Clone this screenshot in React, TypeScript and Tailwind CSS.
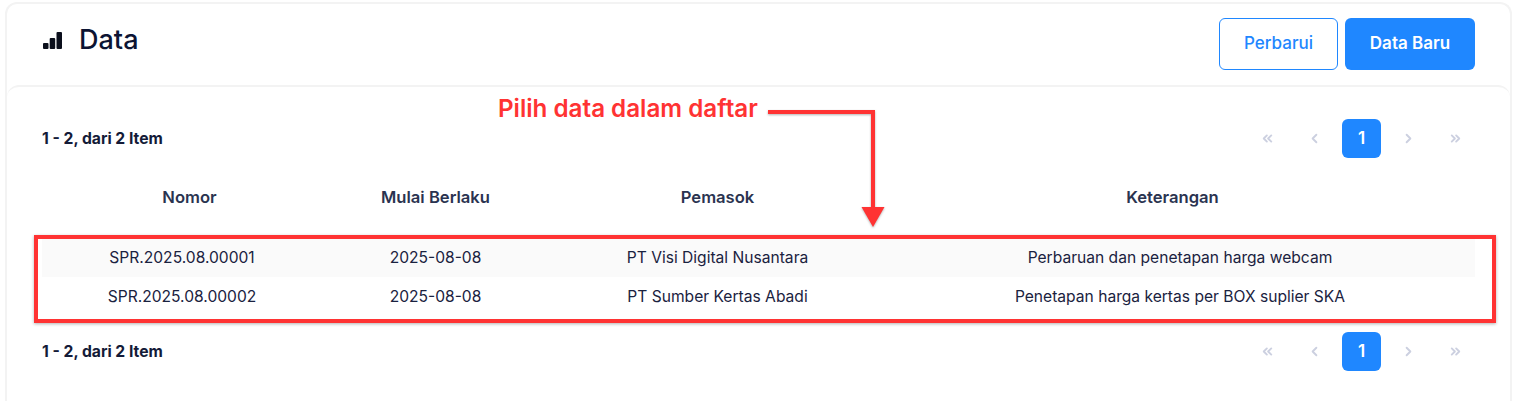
import { ChevronLeft, ChevronRight, ChevronsLeft, ChevronsRight } from "lucide-react";

const rows = [
  { nomor: "SPR.2025.08.00001", mulai: "2025-08-08", pemasok: "PT Visi Digital Nusantara", ket: "Perbaruan dan penetapan harga webcam" },
  { nomor: "SPR.2025.08.00002", mulai: "2025-08-08", pemasok: "PT Sumber Kertas Abadi", ket: "Penetapan harga kertas per BOX suplier SKA" },
];

const Pager = () => (
  <div className="flex items-center justify-between h-[39px]">
    <span className="text-[15.7px] font-[650] text-[#141b38]">1 - 2, dari 2 Item</span>
    <div className="flex items-center text-[#ccd0e0]">
      <span className="w-[39px] flex justify-center"><ChevronsLeft size={15} strokeWidth={3} /></span>
      <span className="w-[39px] ml-[8px] flex justify-center"><ChevronLeft size={15} strokeWidth={3} /></span>
      <span className="w-[39px] h-[39px] ml-[8px] rounded-[6px] bg-[#1f87ff] text-white text-[17px] font-semibold flex items-center justify-center">1</span>
      <span className="w-[39px] ml-[8px] flex justify-center"><ChevronRight size={15} strokeWidth={3} /></span>
      <span className="w-[39px] ml-[8px] flex justify-center"><ChevronsRight size={15} strokeWidth={3} /></span>
    </div>
  </div>
);

export default function App() {
  return (
    <div className="relative w-[1514px] h-[401px] overflow-hidden bg-white pt-[2px] pl-[5px] pr-[2px] font-['Inter',sans-serif]">
      <div className="h-[420px] rounded-[12px] border-2 border-[#f3f3f3] border-b-0 bg-white">
        <div className="h-[81px] flex justify-between pl-[36px] pr-[35px]">
          <div className="flex items-center gap-[17px] h-[76px]">
            <svg width="19" height="19" viewBox="0 0 19 19" fill="#0b0f1c" className="mt-[-3px]">
              <rect x="0" y="12" width="5.5" height="6" rx="1" />
              <rect x="6.7" y="7" width="5.5" height="11" rx="1" />
              <rect x="13.5" y="1" width="5.5" height="17" rx="1" />
            </svg>
            <h1 className="text-[27px] font-[550] text-[#0c1433] mt-[-3px]">Data</h1>
          </div>
          <div className="flex gap-[7px] pt-[14px]">
            <button className="w-[119px] h-[52px] rounded-[6px] border border-[#1f87ff] text-[#1f87ff] text-[17px] font-medium">Perbarui</button>
            <button className="w-[130px] h-[52px] rounded-[6px] bg-[#1f87ff] text-white text-[17px] font-semibold">Data Baru</button>
          </div>
        </div>
        <div className="h-[340px] rounded-t-[12px] border-t-2 border-[#f3f3f3] pt-[32px] pl-[35px] pr-[35px]">
          <Pager />
          <div className="grid grid-cols-[295px_197px_367px_543px_32px] h-[80px] pb-[2px] text-[16.6px] font-semibold text-[#2a3350] text-center items-center">
            <div>Nomor</div>
            <div>Mulai Berlaku</div>
            <div>Pemasok</div>
            <div>Keterangan</div>
            <div />
          </div>
          {rows.map((r, i) => (
            <div key={r.nomor} className={`grid grid-cols-[280px_227px_337px_588px] h-[39px] items-center text-center text-[15.6px] text-[#1a2240] ${i === 0 ? "bg-[#fafafa]" : ""}`}>
              <div>{r.nomor}</div>
              <div>{r.mulai}</div>
              <div>{r.pemasok}</div>
              <div>{r.ket}</div>
            </div>
          ))}
          <div className="mt-[16px]">
            <Pager />
          </div>
        </div>
      </div>

      {/* red annotation over the table */}
      <div className="absolute left-[34px] top-[235px] w-[1462px] h-[88px] border-4 border-[#ff3333] shadow-[0_1px_3px_rgba(0,0,0,0.3)]" />
      <span className="absolute left-[498px] top-[95px] text-[24.2px] leading-[28px] font-semibold text-[#ff3333] whitespace-nowrap">Pilih data dalam daftar</span>
      <svg className="absolute left-[760px] top-[100px] drop-shadow-[0_1px_1px_rgba(0,0,0,0.3)]" width="130" height="135" viewBox="0 0 130 135" fill="none">
        <path d="M8 12H113V108" stroke="#ff3333" strokeWidth="4" />
        <path d="M101.5 107H124.5L113 127Z" fill="#ff3333" />
      </svg>
    </div>
  );
}
